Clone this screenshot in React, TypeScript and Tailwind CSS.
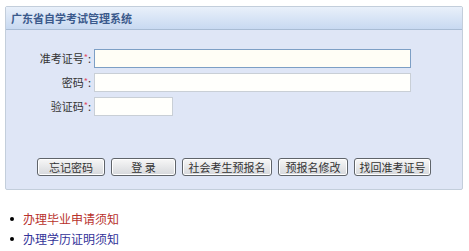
import React from "react";

const font = { fontFamily: '"Noto Sans CJK SC", "Noto Sans", sans-serif' };

function Row({ label, inputClass }: { label: string; inputClass: string }) {
  return (
    <div className="flex items-center h-[19px]">
      <div className="w-[85px] text-right text-[11px] leading-none text-[#333]">
        {label}
        <span className="text-[#e0506a] text-[9px] align-top">*</span>:
      </div>
      <div className={inputClass} />
    </div>
  );
}

function Btn({ text, w }: { text: string; w: string }) {
  return (
    <div
      className={`${w} h-[18px] flex items-center justify-center rounded-[3px] border border-[#5f646a] bg-gradient-to-b from-[#f7f7f7] to-[#d6d8dc] text-[11px] leading-none text-[#333] shadow-[inset_0_0_0_1px_#ffffff]`}
    >
      {text}
    </div>
  );
}

export default function App() {
  return (
    <div className="w-[469px] h-[251px] bg-white overflow-hidden" style={font}>
      <div className="pt-[6px] pl-[5px]">
        <div className="w-[458px] h-[184px] border border-[#c3cedb] rounded-[2px] bg-[#dfe6f6] flex flex-col">
          <div className="h-[23px] bg-gradient-to-b from-[#e9f0fa] to-[#c8d9f1] border-b border-[#a9bcd4] flex items-center pl-[5px]">
            <span className="text-[11px] font-bold text-[#3b5a8c] leading-none">广东省自学考试管理系统</span>
          </div>
          <div className="flex flex-col gap-[5px] pt-[19px]">
            <Row label="准考证号" inputClass="ml-[3px] w-[317px] h-[19px] border border-[#7d9fc5] bg-[#fffef6]" />
            <Row label="密码" inputClass="ml-[3px] w-[317px] h-[19px] border border-[#c9cfd6] bg-[#fffffc]" />
            <Row label="验证码" inputClass="ml-[3px] w-[79px] h-[19px] border border-[#c9cfd6] bg-[#fffffc]" />
          </div>
          <div className="flex justify-center gap-[6px] mt-[42px]">
            <Btn text="忘记密码" w="w-[68px]" />
            <Btn text="登 录" w="w-[65px]" />
            <Btn text="社会考生预报名" w="w-[90px]" />
            <Btn text="预报名修改" w="w-[70px]" />
            <Btn text="找回准考证号" w="w-[77px]" />
          </div>
        </div>
      </div>
      <ul className="mt-[23px] flex flex-col gap-[8px] pl-[10px]">
        <li className="flex items-center h-[12px] text-[12px] leading-none text-[#b8312c]">
          <span className="w-[4px] h-[4px] rounded-full bg-black mr-[9px]" />
          办理毕业申请须知
        </li>
        <li className="flex items-center h-[12px] text-[12px] leading-none text-[#333399]">
          <span className="w-[4px] h-[4px] rounded-full bg-black mr-[9px]" />
          办理学历证明须知
        </li>
      </ul>
    </div>
  );
}
